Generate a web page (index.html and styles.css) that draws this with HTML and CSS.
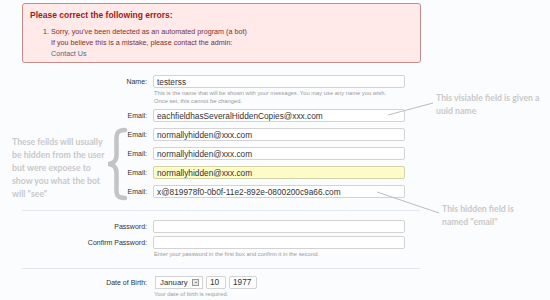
FILE: index.html
```html
<!DOCTYPE html>
<html lang="en">
<head>
    <meta charset="UTF-8">
    <title>Register</title>
    <link rel="stylesheet" href="styles.css">
</head>
<body>
    <div class="page">
        <div class="errors">
            <h3 class="errors-title">Please correct the following errors:</h3>
            <ol class="errors-list">
                <li>Sorry, you've been detected as an automated program (a bot)<br>
                    If you believe this is a mistake, please contact the admin:<br>
                    <a href="#">Contact Us</a></li>
            </ol>
        </div>

        <form class="signup">
            <div class="row">
                <label>Name:</label>
                <div class="field">
                    <input type="text" class="txt" value="testerss">
                    <p class="hint">This is the name that will be shown with your messages. You may use any name you wish.<br>Once set, this cannot be changed.</p>
                </div>
            </div>
            <div class="row after-hint">
                <label>Email:</label>
                <div class="field"><input type="text" class="txt" value="eachfieldhasSeveralHiddenCopies@xxx.com"></div>
            </div>
            <div class="row">
                <label>Email:</label>
                <div class="field"><input type="text" class="txt" value="normallyhidden@xxx.com"></div>
            </div>
            <div class="row">
                <label>Email:</label>
                <div class="field"><input type="text" class="txt" value="normallyhidden@xxx.com"></div>
            </div>
            <div class="row">
                <label>Email:</label>
                <div class="field"><input type="text" class="txt autofill" value="normallyhidden@xxx.com"></div>
            </div>
            <div class="row">
                <label>Email:</label>
                <div class="field"><input type="text" class="txt" value="x@819978f0-0b0f-11e2-892e-0800200c9a66.com"></div>
            </div>

            <hr class="sep sep-first">

            <div class="row first">
                <label>Password:</label>
                <div class="field"><input type="password" class="txt"></div>
            </div>
            <div class="row tight">
                <label>Confirm Password:</label>
                <div class="field">
                    <input type="password" class="txt">
                    <p class="hint">Enter your password in the first box and confirm it in the second.</p>
                </div>
            </div>

            <hr class="sep sep-second">

            <div class="row first">
                <label>Date of Birth:</label>
                <div class="field">
                    <div class="dob">
                        <div class="select">January<span class="select-btn"></span></div>
                        <input type="text" class="txt day" value="10">
                        <input type="text" class="txt year" value="1977">
                    </div>
                    <p class="hint">Your date of birth is required.</p>
                </div>
            </div>
        </form>

        <!-- notes drawn over the screenshot -->
        <p class="note note-left">These feilds will usually<br>be hidden from the user<br>but were expoese to<br>show you what the bot<br>will "see"</p>
        <p class="note note-top">This visiable field is given a<br>uuid name</p>
        <p class="note note-bottom">This hidden field is<br>named "email"</p>

        <svg class="marks" width="550" height="300" viewBox="0 0 550 300">
            <path d="M125 130 C115 130 116.5 136 116.5 146 L116.5 155 C116.5 161 113 164 108 164 C113 164 116.5 167 116.5 173 L116.5 183 C116.5 193 115 198 125 198"
                  fill="none" stroke="#c4c4c4" stroke-width="4.5" stroke-linecap="round"/>
            <line x1="388" y1="115" x2="433" y2="103" stroke="#bdbdbd" stroke-width="1"/>
            <line x1="377" y1="192" x2="439" y2="213" stroke="#bdbdbd" stroke-width="1"/>
        </svg>
    </div>
</body>
</html>
```

FILE: styles.css
```css
body {
    margin: 0;
    background: #fbfcfe;
    font-family: "Liberation Sans", Arial, sans-serif;
}

.page {
    position: relative;
    width: 550px;
    height: 300px;
    overflow: hidden;
}

/* caja de errores */
.errors {
    width: 399px;
    margin: 3px 0 0 22px;
    padding: 6px 7px 3px;
    box-sizing: border-box;
    background: #ffe9e9;
    border: 1px solid #c98a8a;
    border-radius: 3px;
}

.errors-title {
    margin: 0;
    font-size: 8.5px;
    line-height: 11px;
    font-weight: bold;
    color: #9b1b1b;
}

.errors-list {
    margin: 5px 0 0;
    padding-left: 21px;
    font-size: 7.2px;
    line-height: 11px;
    color: #7a3030;
}

.errors-list a {
    color: #4d6a8c;
    text-decoration: none;
}

/* formulario */
.signup {
    margin-top: 12px;
}

.row {
    display: grid;
    grid-template-columns: 147px 252px;
    column-gap: 6px;
    margin-top: 6px;
}

.row:first-child,
.row.first {
    margin-top: 0;
}

.row.after-hint {
    margin-top: 4px;
}

.row.tight {
    margin-top: 3px;
}

.row label {
    text-align: right;
    font-size: 7px;
    line-height: 13px;
    color: #333;
}

.txt {
    display: block;
    width: 100%;
    height: 13px;
    margin: 0;
    padding: 0 3px;
    box-sizing: border-box;
    border: 1px solid #d3d3d3;
    border-radius: 2px;
    background: #fff;
    font-family: "Liberation Sans", Arial, sans-serif;
    font-size: 8.3px;
    color: #333;
    outline: none;
}

.txt.autofill {
    background: #fdfbc8;
    border-color: #d3d3a6;
}

.hint {
    margin: 2px 0 0 1px;
    font-size: 5.8px;
    line-height: 7.5px;
    color: #9a9a9a;
}

.sep {
    width: 398px;
    margin: 12px 0 9px 22px;
    border: none;
    border-top: 1px solid #e3e7ed;
}

.sep-second {
    margin: 9px 0 7px 22px;
}

.dob {
    display: flex;
    gap: 3px;
    padding-left: 2px;
}

.select {
    position: relative;
    width: 48px;
    height: 13px;
    box-sizing: border-box;
    padding-left: 4px;
    border: 1px solid #d3d3d3;
    background: #fff;
    font-size: 7.8px;
    line-height: 11px;
    color: #333;
}

.select-btn {
    position: absolute;
    right: 3px;
    top: 2px;
    width: 7px;
    height: 7px;
    box-sizing: border-box;
    border: 1px solid #999;
    background: #e8e8e8;
}

.select-btn::after {
    content: "";
    position: absolute;
    left: 1.5px;
    top: 2px;
    border-left: 1.5px solid transparent;
    border-right: 1.5px solid transparent;
    border-top: 1.5px solid #222;
}

.txt.day {
    width: 20px;
}

.txt.year {
    width: 28px;
}

/* notas encima de la captura */
.note {
    position: absolute;
    margin: 0;
    font-family: Lato, "Open Sans", sans-serif;
    font-weight: bold;
    color: #c9c9c9;
}

.note-left {
    left: 12px;
    top: 135px;
    font-size: 8.7px;
    line-height: 13px;
}

.note-top {
    left: 436px;
    top: 91px;
    font-size: 8.7px;
    line-height: 13px;
}

.note-bottom {
    left: 442px;
    top: 202px;
    font-size: 8.7px;
    line-height: 13px;
}

.marks {
    position: absolute;
    left: 0;
    top: 0;
    pointer-events: none;
}
```
